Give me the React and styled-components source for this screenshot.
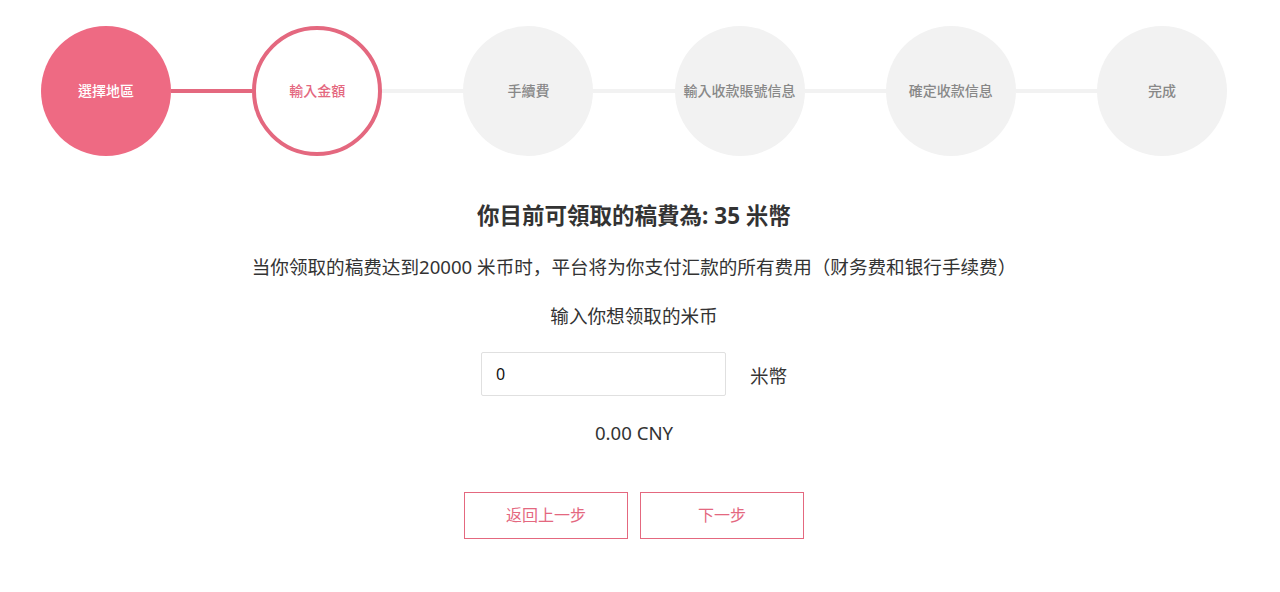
import React from "react"
import styled, { createGlobalStyle } from "styled-components"

const pink = "#ee6a83"
const pinkLine = "#e4687f"

const GlobalStyle = createGlobalStyle`
    body {
        margin: 0;
        background: #fff;
        font-family: "Noto Sans", "Noto Sans CJK SC", sans-serif;
        color: #333;
    }
`

const Page = styled.div`
    width: 1268px;
`

const Stepper = styled.div`
    display: flex;
    align-items: center;
    padding: 26px 41px 0;
`

const Circle = styled.div`
    box-sizing: border-box;
    flex: 0 0 130px;
    height: 130px;
    padding-bottom: 3px;
    border-radius: 50%;
    display: flex;
    align-items: center;
    justify-content: center;
    font-family: "Noto Sans CJK TC", sans-serif;
    font-size: 14px;
    font-weight: 500;
    white-space: nowrap;
    background: ${p => p.$state === "done" ? pink : p.$state === "current" ? "#fff" : "#f2f2f2"};
    color: ${p => p.$state === "done" ? "#fff" : p.$state === "current" ? pinkLine : "#888"};
    border: ${p => p.$state === "current" ? `4px solid ${pinkLine}` : "none"};
`

const Connector = styled.div`
    flex: 1;
    height: 4px;
    background: ${p => p.$active ? pinkLine : "#f2f2f2"};
`

const Content = styled.div`
    display: flex;
    flex-direction: column;
    align-items: center;
    padding-bottom: 40px;
`

const Title = styled.h2`
    margin: 45px 0 0;
    font-family: "Noto Sans", "Noto Sans CJK TC", sans-serif;
    font-size: 22.5px;
    line-height: 30px;
    font-weight: 700;
    color: #333;
`

const Text = styled.p`
    margin: ${p => p.$gap || 20}px 0 0;
    font-family: "Noto Sans", "Noto Sans CJK SC", sans-serif;
    font-size: 18.6px;
    line-height: 30px;
    color: #333;
`

const InputRow = styled.div`
    display: flex;
    align-items: center;
    gap: 24px;
    margin-top: 21px;
`

const AmountInput = styled.input`
    box-sizing: border-box;
    width: 245px;
    height: 44px;
    border: 1px solid #e0e0e0;
    border-radius: 2px;
    padding: 0 14px;
    font-family: "Noto Sans", sans-serif;
    font-size: 16px;
    color: #111;
    outline: none;
`

const Unit = styled.span`
    font-family: "Noto Sans CJK TC", sans-serif;
    font-size: 18.6px;
    color: #333;
`

const Buttons = styled.div`
    display: flex;
    gap: 12px;
    margin-top: 44px;
`

const Button = styled.button`
    box-sizing: border-box;
    width: 164px;
    height: 47px;
    padding: 0 0 3px;
    background: #fff;
    border: 1px solid ${pinkLine};
    color: ${pinkLine};
    font-family: "Noto Sans CJK SC", sans-serif;
    font-size: 16px;
    cursor: pointer;
`

const steps = ["選擇地區", "輸入金額", "手續費", "輸入收款賬號信息", "確定收款信息", "完成"]

const stateOf = i => (i === 0 ? "done" : i === 1 ? "current" : "todo")

const App = () =>
    <>
    <GlobalStyle/>
    <Page>
        <Stepper>
            {steps.map((s, i) =>
                <React.Fragment key={s}>
                    {i > 0 && <Connector $active={i === 1}/>}
                    <Circle $state={stateOf(i)}>{s}</Circle>
                </React.Fragment>
            )}
        </Stepper>
        <Content>
            <Title>你目前可領取的稿費為: 35 米幣</Title>
            <Text $gap={21}>当你领取的稿费达到20000 米币时，平台将为你支付汇款的所有费用（财务费和银行手续费）</Text>
            <Text $gap={19}>输入你想领取的米币</Text>
            <InputRow>
                <AmountInput defaultValue="0"/>
                <Unit>米幣</Unit>
            </InputRow>
            <Text $gap={22}>0.00 CNY</Text>
            <Buttons>
                <Button>返回上一步</Button>
                <Button>下一步</Button>
            </Buttons>
        </Content>
    </Page>
    </>

export default App
